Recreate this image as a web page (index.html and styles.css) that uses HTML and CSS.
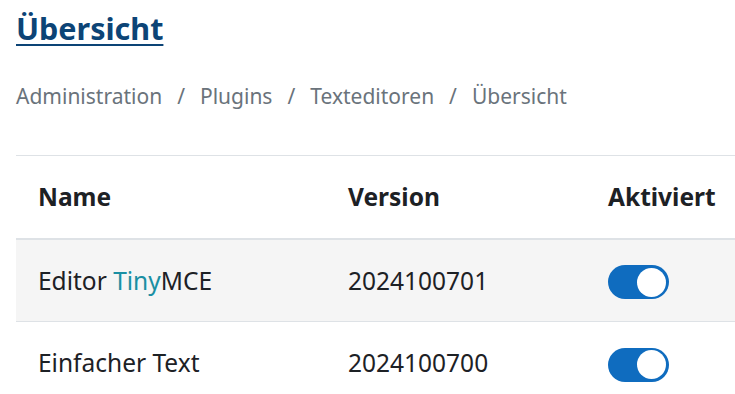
FILE: index.html
```html
<!DOCTYPE html>
<html lang="de">
<head>
  <meta charset="UTF-8" />
  <meta name="viewport" content="width=device-width, initial-scale=1.0" />
  <title>Übersicht</title>
  <link rel="stylesheet" href="styles.css">
</head>
<body>
  <div class="page">
    <h1 class="page-title"><a href="#">Übersicht</a></h1>
    <nav class="breadcrumb">
      <a href="#">Administration</a>
      <span class="sep">/</span>
      <a href="#">Plugins</a>
      <span class="sep">/</span>
      <a href="#">Texteditoren</a>
      <span class="sep">/</span>
      <span>Übersicht</span>
    </nav>
    <table class="plugins">
      <thead>
        <tr>
          <th class="col-name">Name</th>
          <th class="col-version">Version</th>
          <th>Aktiviert</th>
        </tr>
      </thead>
      <tbody>
        <tr class="striped">
          <td>Editor <span class="tiny">Tiny</span>MCE</td>
          <td>2024100701</td>
          <td><span class="switch"><span class="knob"></span></span></td>
        </tr>
        <tr>
          <td>Einfacher Text</td>
          <td>2024100700</td>
          <td><span class="switch"><span class="knob"></span></span></td>
        </tr>
      </tbody>
    </table>
  </div>
</body>
</html>
```
FILE: styles.css
```css
body {
  margin: 0;
  font-family: "Noto Sans", "Open Sans", sans-serif;
  color: #1d2125;
  background: #ffffff;
  overflow: hidden;
}
.page {
  padding: 10px 0 0 16px;
}
.page-title {
  margin: 0;
  font-size: 30.5px;
  line-height: 36px;
  font-weight: bold;
}
.page-title a {
  color: #0c4476;
  text-decoration: underline;
  text-decoration-thickness: 2px;
  text-underline-offset: 4px;
}
.breadcrumb {
  margin-top: 35px;
  display: flex;
  gap: 15px;
  font-size: 21px;
  line-height: 30px;
  color: #6a737b;
}
.breadcrumb a {
  color: #6a737b;
  text-decoration: none;
}
.plugins {
  margin-top: 44px;
  width: calc(100% + 4px);
  border-collapse: collapse;
  font-size: 24.5px;
  line-height: 36px;
  border-top: 1px solid #dee2e6;
}
.plugins th,
.plugins td {
  text-align: left;
  padding: 22px 22px;
  vertical-align: middle;
}
.plugins thead th {
  padding-top: 23px;
  padding-bottom: 23px;
  font-weight: bold;
  border-bottom: 2px solid #dee2e6;
}
.plugins tbody tr {
  border-bottom: 1px solid #dee2e6;
}
.col-name {
  width: 266px;
}
.col-version {
  width: 216px;
}
.striped {
  background: #f5f5f5;
}
.tiny {
  color: #1a8fa3;
}
.switch {
  display: inline-flex;
  justify-content: flex-end;
  align-items: center;
  box-sizing: border-box;
  width: 61px;
  height: 34px;
  padding: 0 3px;
  border-radius: 17px;
  background: #0f6cbf;
  vertical-align: middle;
}
.knob {
  width: 29px;
  height: 29px;
  border-radius: 50%;
  background: #ffffff;
}
```
